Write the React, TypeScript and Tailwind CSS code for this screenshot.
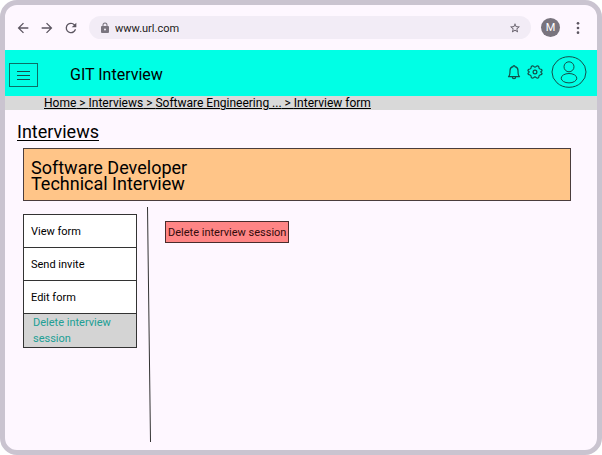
import type { ReactNode } from "react";

const crumbs = ["Home", "Interviews", "Software Engineering ...", "Interview form"];
const actions = ["View form", "Send invite", "Edit form"];

function Icon({ className, children }: { className: string; children: ReactNode }) {
  return (
    <svg viewBox="0 0 24 24" className={className} fill="currentColor" aria-hidden="true">
      {children}
    </svg>
  );
}

function BrowserBar() {
  return (
    <div className="flex h-[45px] items-center pr-[11px] pl-[10px] text-[#5c5661]">
      <div className="flex gap-2">
        <button type="button" aria-label="Back" className="grid size-4 place-items-center">
          <Icon className="size-4">
            <path d="M20 11H7.83l5.59-5.59L12 4l-8 8 8 8 1.410-1.410L7.830 13H20v-2z" />
          </Icon>
        </button>
        <button type="button" aria-label="Forward" className="grid size-4 place-items-center">
          <Icon className="size-4">
            <path d="M12 4l-1.410 1.410L16.170 11H4v2h12.170l-5.580 5.590L12 20l8-8z" />
          </Icon>
        </button>
        <button type="button" aria-label="Reload" className="grid size-4 place-items-center">
          <Icon className="size-4">
            <path d="M17.650 6.350A7.960 7.960 0 0 0 12 4a8 8 0 1 0 7.730 10h-2.080A6 6 0 1 1 12 6c1.660 0 3.140.69 4.220 1.780L13 11h7V4l-2.350 2.350z" />
          </Icon>
        </button>
      </div>
      <div className="ml-[10px] flex h-[23px] min-w-0 flex-1 items-center rounded-full bg-[#f2ecf6] px-[10px]">
        <Icon className="size-3 shrink-0 text-[#79747e]">
          <path d="M18 8h-1V6A5 5 0 0 0 7 6v2H6a2 2 0 0 0-2 2v10a2 2 0 0 0 2 2h12a2 2 0 0 0 2-2V10a2 2 0 0 0-2-2zm-6 9a2 2 0 1 1 0-4 2 2 0 0 1 0 4zm3-9H9V6a3 3 0 0 1 6 0v2z" />
        </Icon>
        <input
          aria-label="Address"
          defaultValue="www.url.com"
          className="ml-1 h-full min-w-0 flex-1 bg-transparent pt-px text-[11px] text-[#1d1b20] outline-none"
        />
        <button type="button" aria-label="Bookmark">
          <Icon className="size-3">
            <path d="M22 9.240l-7.190-.62L12 2 9.190 8.630 2 9.240l5.460 4.730L5.820 21 12 17.270 18.180 21l-1.630-7.030L22 9.240zM12 15.400l-3.760 2.270 1-4.280-3.320-2.880 4.380-.38L12 6.100l1.710 4.040 4.380.38-3.320 2.880 1 4.280L12 15.400z" />
          </Icon>
        </button>
      </div>
      <button
        type="button"
        aria-label="Profile M"
        className="ml-[10px] grid size-[19px] place-items-center rounded-full bg-[#79747e] text-[11px] leading-none text-white"
      >
        M
      </button>
      <button type="button" aria-label="Browser menu" className="ml-[10px]">
        <Icon className="size-4">
          <circle cx="12" cy="5" r="2" />
          <circle cx="12" cy="12" r="2" />
          <circle cx="12" cy="19" r="2" />
        </Icon>
      </button>
    </div>
  );
}

function SiteHeader() {
  return (
    <header className="flex h-[46px] items-center bg-[#00ffe5] pr-[10px] pl-1 text-[#144f4a]">
      <button
        type="button"
        aria-label="Open menu"
        className="mt-1 grid h-6 w-[29px] place-items-center border border-[#0b6f66]"
      >
        <svg viewBox="0 0 13 9" className="h-[9px] w-[13px]" stroke="currentColor" aria-hidden="true">
          <path d="M0 .5h13M0 4.500h13M0 8.500h13" />
        </svg>
      </button>
      <h1 className="mt-1 ml-8 flex-1 text-[16px] text-black">GIT Interview</h1>
      <div className="flex items-center pb-[2px]">
        <button type="button" aria-label="Notifications">
          <svg viewBox="0 0 14 16" className="h-4 w-[14px]" fill="none" stroke="currentColor" strokeWidth="1.200" aria-hidden="true">
            <path d="M1.500 12.700c1.500-1.200 1.500-3 1.500-6a4 4 0 0 1 3-4 1 1 0 0 1 2 0 4 4 0 0 1 3 4c0 3 0 4.800 1.500 6zM5.300 13a1.700 1.700 0 0 0 3.400 0" strokeLinejoin="round" />
          </svg>
        </button>
        <button type="button" aria-label="Settings" className="ml-[6px]">
          <svg viewBox="0 0 16 16" className="size-4" fill="none" stroke="currentColor" strokeWidth="1.200" strokeLinejoin="round" aria-hidden="true">
            <circle cx="8" cy="8" r="1.900" />
            <path d="M5.700 1.800c-1.100 0-1.800.8-1.600 2.100-.2.600-.6.900-1.200 1.100C1.400 5.300.8 6 1 6.800c.2.500 1.200.7 1.200 1.200S1.200 8.700 1 9.200c-.2.800.4 1.500 1.900 1.800.6.200 1 .5 1.200 1.100-.2 1.300.5 2.100 1.600 2.100.8 0 1.300-1.300 2.300-1.300s1.500 1.300 2.300 1.300c1.100 0 1.800-.8 1.600-2.100.2-.6.600-.9 1.200-1.100 1.500-.3 2.100-1 1.900-1.800-.2-.5-1.200-.7-1.200-1.200s1-.7 1.200-1.200c.2-.8-.4-1.500-1.900-1.800-.6-.2-1-.5-1.200-1.100.2-1.300-.5-2.100-1.600-2.100C9.500 1.800 9 3.100 8 3.100S6.500 1.800 5.700 1.800z" />
          </svg>
        </button>
        <button type="button" aria-label="Account" className="ml-2">
          <svg viewBox="0 0 36 32" className="h-8 w-9" fill="none" stroke="currentColor" strokeWidth="1" aria-hidden="true">
            <ellipse cx="18" cy="16" rx="17" ry="15.300" />
            <circle cx="18" cy="10.800" r="5" />
            <ellipse cx="18" cy="22.200" rx="7.800" ry="4.700" />
          </svg>
        </button>
      </div>
    </header>
  );
}

export default function App() {
  return (
    <div className="flex min-h-screen bg-white font-['Roboto',sans-serif] text-black">
      <div className="flex flex-1 flex-col overflow-hidden rounded-[17px] border-5 border-[#cac4d0] bg-[#fef7ff]">
        <BrowserBar />
        <SiteHeader />
        <nav aria-label="Breadcrumb" className="h-[14px] bg-[#d9d9d9] pl-[39px] text-[12px] leading-[14px] underline">
          {crumbs.map((crumb, i) => (
            <span key={crumb}>
              {i > 0 && " > "}
              <a href="#">{crumb}</a>
            </span>
          ))}
        </nav>
        <main className="flex flex-1 flex-col pt-3 pr-[26px] pb-2 pl-[18px]">
          <h2 className="-ml-[6px] text-[18px] leading-5 underline underline-offset-2">Interviews</h2>
          <section className="mt-[6px] flex h-[53px] items-center border border-[#4a3d3d] bg-[#ffc588] px-[7px]">
            <h3 className="pt-[2px] text-[18px] leading-4">
              Software Developer
              <br />
              Technical Interview
            </h3>
          </section>
          <div className="flex flex-1 items-stretch pt-[6px]">
            <ul className="mt-[7px] w-[114px] self-start border border-[#333] bg-white text-[11px]">
              {actions.map((action) => (
                <li key={action} className="border-b border-[#333]">
                  <button type="button" className="h-8 w-full px-[7px] pt-[2px] text-left">
                    {action}
                  </button>
                </li>
              ))}
              <li className="bg-[#d4d4d4]">
                <button type="button" className="block h-[33px] w-full px-[9px] text-left leading-4 text-[#219f95]">
                  Delete interview session
                </button>
              </li>
            </ul>
            <svg viewBox="0 0 4 100" preserveAspectRatio="none" className="ml-[10px] w-1 self-stretch" stroke="#333" aria-hidden="true">
              <path d="M.5 0L3.500 100" vectorEffect="non-scaling-stroke" />
            </svg>
            <button
              type="button"
              className="mt-[14px] ml-[14px] h-[22px] self-start border border-[#4a2c2c] bg-[#ff8585] px-[2px] pt-[2px] text-[11px] text-[#330c0c]"
            >
              Delete interview session
            </button>
          </div>
        </main>
      </div>
    </div>
  );
}
